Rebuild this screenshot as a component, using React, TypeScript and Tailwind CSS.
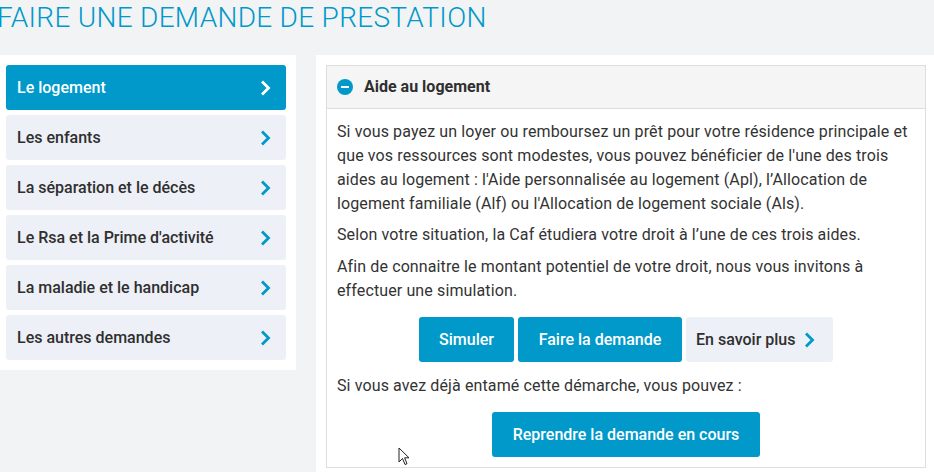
const menu = [
  "Le logement",
  "Les enfants",
  "La séparation et le décès",
  "Le Rsa et la Prime d'activité",
  "La maladie et le handicap",
  "Les autres demandes",
];

function Chevron({ white }: { white?: boolean }) {
  return (
    <svg width="12" height="16" viewBox="0 0 12 16" className="shrink-0">
      <path
        d="M3 2.5 L8.5 8 L3 13.5"
        fill="none"
        stroke={white ? "#ffffff" : "#0099c9"}
        strokeWidth="2.8"
        strokeLinecap="square"
      />
    </svg>
  );
}

export default function App() {
  return (
    <div className="relative min-h-screen overflow-hidden bg-[#f2f3f5] font-['Roboto','Liberation_Sans',sans-serif] text-[#333]">
      <h1 className="-ml-[3px] h-[55px] pt-[1px] text-[28px] font-light leading-[34px] tracking-[0.3px] text-[#0099c9] whitespace-nowrap">
        FAIRE UNE DEMANDE DE PRESTATION
      </h1>

      <div className="flex items-start gap-5">
        <div className="w-[296px] shrink-0 bg-white pt-[10px] pb-[10px] pl-[6px] pr-[10px]">
          <ul className="flex flex-col gap-[5px]">
            {menu.map((item, i) => (
              <li
                key={item}
                className={
                  "flex h-[45px] items-center justify-between rounded-[3px] pl-[11px] pr-[14px] text-[16px] font-medium " +
                  (i === 0 ? "bg-[#0099c9] text-white" : "bg-[#edf0f7] text-[#2f2f2f]")
                }
              >
                <span>{item}</span>
                <Chevron white={i === 0} />
              </li>
            ))}
          </ul>
        </div>

        <div className="flex-1 min-h-[417px] bg-white pt-[10px] pl-[10px]">
          <div className="w-[600px] border border-[#dedede]">
            <div className="flex h-[43px] items-center gap-[11px] border-b border-[#dedede] bg-[#f5f5f5] pl-[10px]">
              <span className="flex h-[16px] w-[16px] items-center justify-center rounded-full bg-[#0099c9]">
                <span className="h-[2px] w-[8px] bg-white" />
              </span>
              <span className="text-[16px] font-bold text-[#2f2f2f]">Aide au logement</span>
            </div>

            <div className="px-[10px] pt-[11px] pb-[10px] text-[16px] leading-[24px] tracking-[0.12px] text-[#333]">
              <p>
                Si vous payez un loyer ou remboursez un prêt pour votre résidence principale et
                que vos ressources sont modestes, vous pouvez bénéficier de l'une des trois
                aides au logement : l'Aide personnalisée au logement (Apl), l’Allocation de
                logement familiale (Alf) ou l'Allocation de logement sociale (Als).
              </p>
              <p className="mt-[7px]">Selon votre situation, la Caf étudiera votre droit à l’une de ces trois aides.</p>
              <p className="mt-[8px]">
                Afin de connaitre le montant potentiel de votre droit, nous vous invitons à
                effectuer une simulation.
              </p>

              <div className="mt-[14px] flex justify-center gap-[4px] tracking-normal">
                <button className="h-[45px] w-[95px] rounded-[3px] bg-[#0099c9] text-[16px] font-medium text-white">
                  Simuler
                </button>
                <button className="h-[45px] w-[164px] rounded-[3px] bg-[#0099c9] text-[16px] font-medium text-white">
                  Faire la demande
                </button>
                <button className="flex h-[45px] w-[147px] items-center gap-[9px] rounded-[3px] bg-[#edf0f7] pl-[10px] text-[16px] font-medium text-[#2f2f2f]">
                  En savoir plus
                  <Chevron />
                </button>
              </div>

              <p className="mt-[12px]">Si vous avez déjà entamé cette démarche, vous pouvez :</p>

              <div className="mt-[14px] flex justify-center tracking-normal">
                <button className="h-[45px] w-[268px] rounded-[3px] bg-[#0099c9] text-[16px] font-medium text-white">
                  Reprendre la demande en cours
                </button>
              </div>
            </div>
          </div>
        </div>
      </div>

      <svg
        className="absolute left-[398px] top-[447px]"
        width="12"
        height="19"
        viewBox="0 0 12 19"
      >
        <path d="M1 1 L1 15 L4.5 11.5 L7 17.5 L9 16.7 L6.6 10.8 L11 10.8 Z" fill="#fff" stroke="#222" strokeWidth="1" strokeLinejoin="round" />
      </svg>
    </div>
  );
}
